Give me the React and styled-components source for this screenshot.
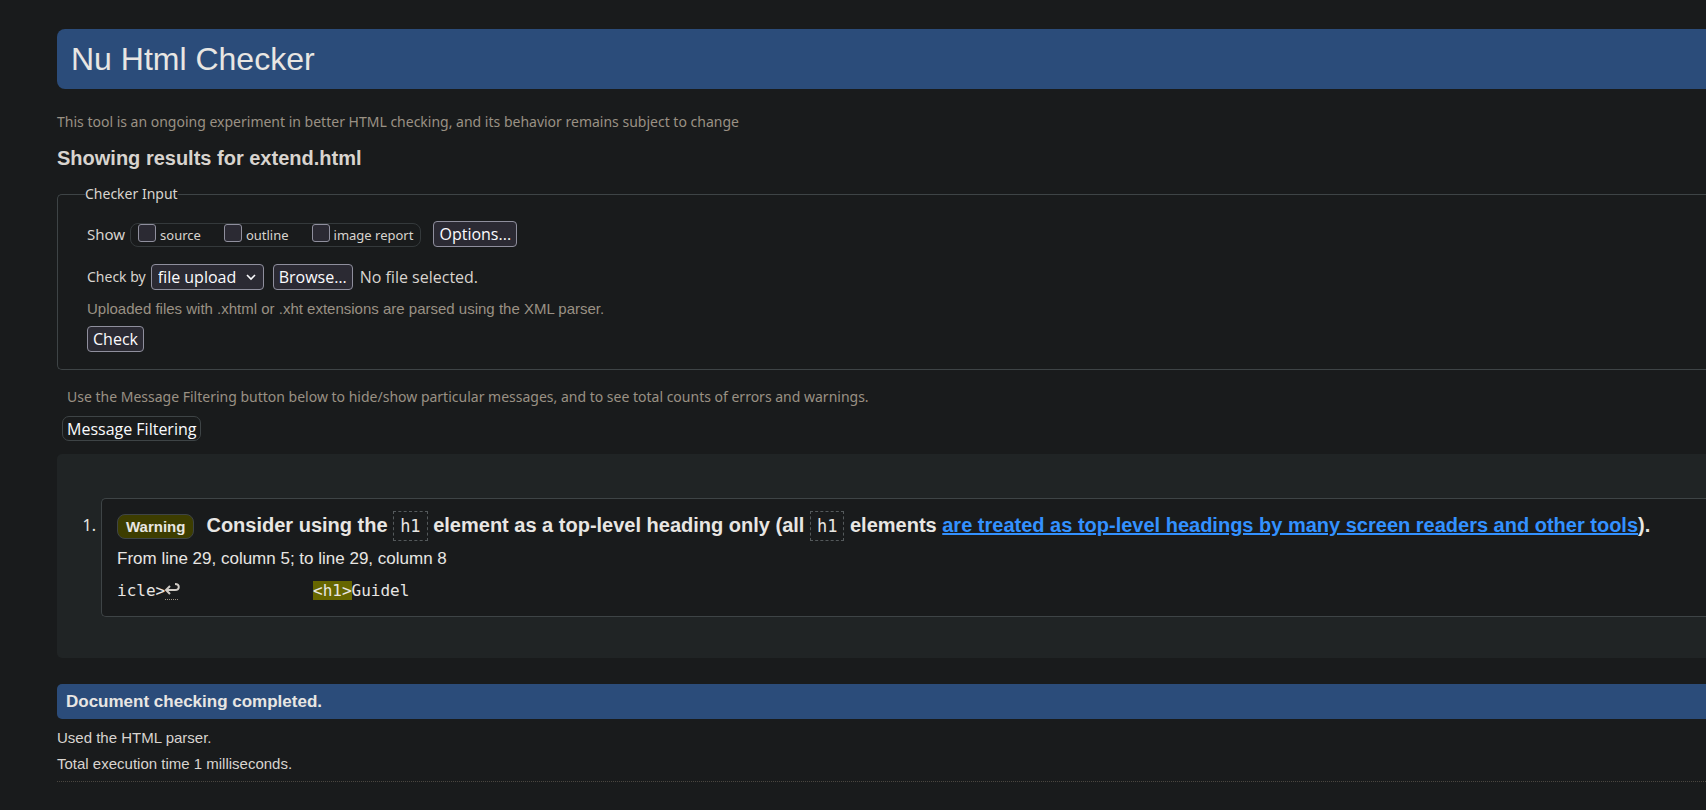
import React, { useRef } from "react";
import styled, { createGlobalStyle } from "styled-components";

const sans = `"Liberation Sans", Arial, sans-serif`;
const ui = `"Open Sans", "Segoe UI", sans-serif`;
const control = `"Noto Sans", "Segoe UI", sans-serif`;
const mono = `"DejaVu Sans Mono", Consolas, monospace`;

const GlobalStyle = createGlobalStyle`
  *, *::before, *::after { box-sizing: border-box; }
  html { background: #191b1c; color-scheme: dark; }
  body {
    margin: 0;
    overflow-x: hidden;
    background: #191b1c;
    color: #d8d4cf;
    font: 15px/26px ${sans};
  }
`;

const Page = styled.div`
  padding: 29px 0 27px 57px;
`;

const Banner = styled.header`
  padding: 12px 14px;
  border-radius: 8px 0 0 8px;
  background: #2b4c7a;
`;

const Title = styled.h1`
  margin: 0;
  color: #e8e6e3;
  font-size: 32px;
  line-height: 36px;
  font-weight: 400;
`;

const Note = styled.p`
  margin: ${(p) => p.$margin || "0"};
  color: #9a9184;
  font-family: ${(p) => (p.$plain ? sans : control)};
  font-size: ${(p) => (p.$plain ? 15 : 14)}px;
  line-height: 22px;
`;

const ResultsHeading = styled.h2`
  margin: 0;
  font-size: 20px;
  line-height: 24px;
`;

const InputGroup = styled.fieldset`
  display: block;
  min-width: 0;
  margin: 14px 0 0;
  padding: 17px 29px 17px;
  border: 1px solid #3e4446;
  border-right: 0;
  border-radius: 5px 0 0 5px;
`;

const Legend = styled.legend`
  margin-left: -2px;
  padding: 0;
  font-family: ${control};
  font-size: 14px;
  line-height: 20px;
`;

const Row = styled.div`
  display: flex;
  align-items: center;
  margin-bottom: ${(p) => p.$after || 0}px;
`;

const RowLabel = styled.label`
  margin-right: 5px;
  font-family: ${control};
  font-size: ${(p) => p.$size || 14}px;
  line-height: 20px;
`;

const OptionGroup = styled.div`
  display: flex;
  gap: 23px;
  align-items: center;
  height: 24px;
  margin: 2px 12px 0 0;
  padding: 0 7px;
  border: 1px solid #34393b;
  border-radius: 8px;
`;

const CheckLabel = styled.label`
  display: flex;
  gap: 4px;
  align-items: center;
  font: 13px/20px ${control};
`;

const CheckBox = styled.input`
  appearance: none;
  width: 18px;
  height: 18px;
  margin: 0 0 4px;
  border: 1px solid #8f8f9d;
  border-radius: 3px;
  background: #2b2a33;
  &:checked { background: #2b4c7a; }
`;

const Button = styled.button`
  height: 26px;
  padding: 0 5px;
  border: 1px solid #8f8f9d;
  border-radius: 4px;
  background: #2b2a33;
  color: #fbfbfe;
  font: 16px/22px ${ui};
`;

const FilterButton = styled(Button)`
  display: block;
  margin: 8px 0 13px 5px;
  padding: 0 4px;
  height: 25px;
  border-color: #3e4446;
  border-radius: 7px;
  background: transparent;
`;

const SelectWrap = styled.span`
  display: inline-flex;
  position: relative;
  margin-right: 9px;
  svg {
    position: absolute;
    right: 8px;
    top: 9px;
    pointer-events: none;
  }
`;

const Select = styled.select`
  appearance: none;
  height: 26px;
  padding: 0 26px 0 6px;
  border: 1px solid #8f8f9d;
  border-radius: 4px;
  background: #2b2a33;
  color: #fbfbfe;
  font: 16px/22px ${ui};
`;

const FileName = styled.span`
  margin-left: 7px;
  font: 16px/22px ${ui};
`;

const Results = styled.section`
  padding: 44px 0 41px 44px;
  border-radius: 5px 0 0 5px;
  background: #202425;
`;

const MessageList = styled.ol`
  margin: 0;
  padding: 0;
  list-style: none;
  counter-reset: message;
`;

const Message = styled.li`
  position: relative;
  counter-increment: message;
  padding: 11px 0 11px 15px;
  border: 1px solid #3e4446;
  border-right: 0;
  border-radius: 5px 0 0 5px;
  background: #191b1c;
  color: #e8e6e3;
  &::before {
    content: counter(message) ".";
    position: absolute;
    right: 100%;
    top: 15px;
    padding-right: 6px;
    font: 16px/22px ${control};
  }
`;

const MessageText = styled.p`
  margin: 0;
  font-size: 20px;
  line-height: 30px;
  font-weight: 700;
`;

const Badge = styled.strong`
  display: inline-block;
  margin-right: 12px;
  padding: 0 8px;
  border: 1px solid #3e4446;
  border-radius: 8px;
  background: #3d3d00;
  font: 700 15px/23px ${sans};
`;

const Code = styled.code`
  display: inline-block;
  padding: 0 6px;
  border: 1px dashed #54595b;
  font: 400 17px/28px ${mono};
`;

const Link = styled.a`
  color: #3391ff;
`;

const Location = styled.p`
  margin: 5px 0 5px;
  font-size: 17px;
  line-height: 26px;
`;

const Extract = styled.pre`
  margin: 0;
  font: 16px/28px ${mono};
`;

const LineBreak = styled.abbr`
  display: inline-block;
  width: 13px;
  height: 18px;
  border-bottom: 1px dotted #9a9184;
  vertical-align: -4px;
  svg { display: block; overflow: visible; }
`;

const Mark = styled.mark`
  background: #666600;
  color: inherit;
`;

const Success = styled.p`
  margin: 26px 0 6px;
  padding: 0 9px;
  border-radius: 5px 0 0 5px;
  background: #2b4c7a;
  color: #e8e6e3;
  font-size: 17px;
  line-height: 35px;
  font-weight: 700;
`;

const Detail = styled.p`
  margin: 0;
`;

const Rule = styled.hr`
  margin: 4px 0 0;
  border: 0;
  border-top: 1px dotted #4a4640;
`;

const SHOW = ["source", "outline", "image report"];

export default function App() {
  const file = useRef(null);
  return (
    <>
      <GlobalStyle />
      <Page>
        <Banner>
          <Title>Nu Html Checker</Title>
        </Banner>
        <Note $margin="22px 0 13px">
          This tool is an ongoing experiment in better HTML checking, and its behavior remains subject to change
        </Note>
        <ResultsHeading>Showing results for extend.html</ResultsHeading>
        <form onSubmit={(e) => e.preventDefault()}>
          <InputGroup>
            <Legend>Checker Input</Legend>
            <Row $after={17}>
              <RowLabel as="span" $size={15}>Show</RowLabel>
              <OptionGroup>
                {SHOW.map((name) => (
                  <CheckLabel key={name}>
                    <CheckBox type="checkbox" />
                    {name}
                  </CheckLabel>
                ))}
              </OptionGroup>
              <Button type="button">Options...</Button>
            </Row>
            <Row $after={8}>
              <RowLabel htmlFor="method">Check by</RowLabel>
              <SelectWrap>
                <Select id="method" defaultValue="file upload">
                  <option>file upload</option>
                </Select>
                <svg width="10" height="8" viewBox="0 0 10 8" fill="none" stroke="#fbfbfe" strokeWidth="1.6">
                  <path d="M1 2l4 4 4-4" />
                </svg>
              </SelectWrap>
              <input ref={file} type="file" hidden aria-label="File" />
              <Button type="button" onClick={() => file.current.click()}>Browse…</Button>
              <FileName>No file selected.</FileName>
            </Row>
            <Note $plain $margin="0 0 6px">
              Uploaded files with .xhtml or .xht extensions are parsed using the XML parser.
            </Note>
            <Row>
              <Button type="submit">Check</Button>
            </Row>
          </InputGroup>
        </form>
        <Note $margin="16px 0 0 10px">
          Use the Message Filtering button below to hide/show particular messages, and to see total counts of errors and warnings.
        </Note>
        <FilterButton type="button">Message Filtering</FilterButton>
        <Results>
          <MessageList>
            <Message>
              <MessageText>
                <Badge>Warning</Badge>
                Consider using the <Code>h1</Code> element as a top-level heading only (all <Code>h1</Code> elements{" "}
                <Link href="#headings">are treated as top-level headings by many screen readers and other tools</Link>).
              </MessageText>
              <Location>From line 29, column 5; to line 29, column 8</Location>
              <Extract>
                icle&gt;
                <LineBreak title="Line break">
                  <svg width="15" height="14" viewBox="0 0 15 14" fill="none" stroke="#d0ccc6" strokeWidth="2">
                    <path d="M5 4L1 8l4 4M1 8h9c5 0 5-6 0-6" />
                  </svg>
                </LineBreak>
                {"              "}
                <Mark>&lt;h1&gt;</Mark>
                Guidel
              </Extract>
            </Message>
          </MessageList>
        </Results>
        <Success>Document checking completed.</Success>
        <Detail>Used the HTML parser.</Detail>
        <Detail>Total execution time 1 milliseconds.</Detail>
        <Rule />
      </Page>
    </>
  );
}
